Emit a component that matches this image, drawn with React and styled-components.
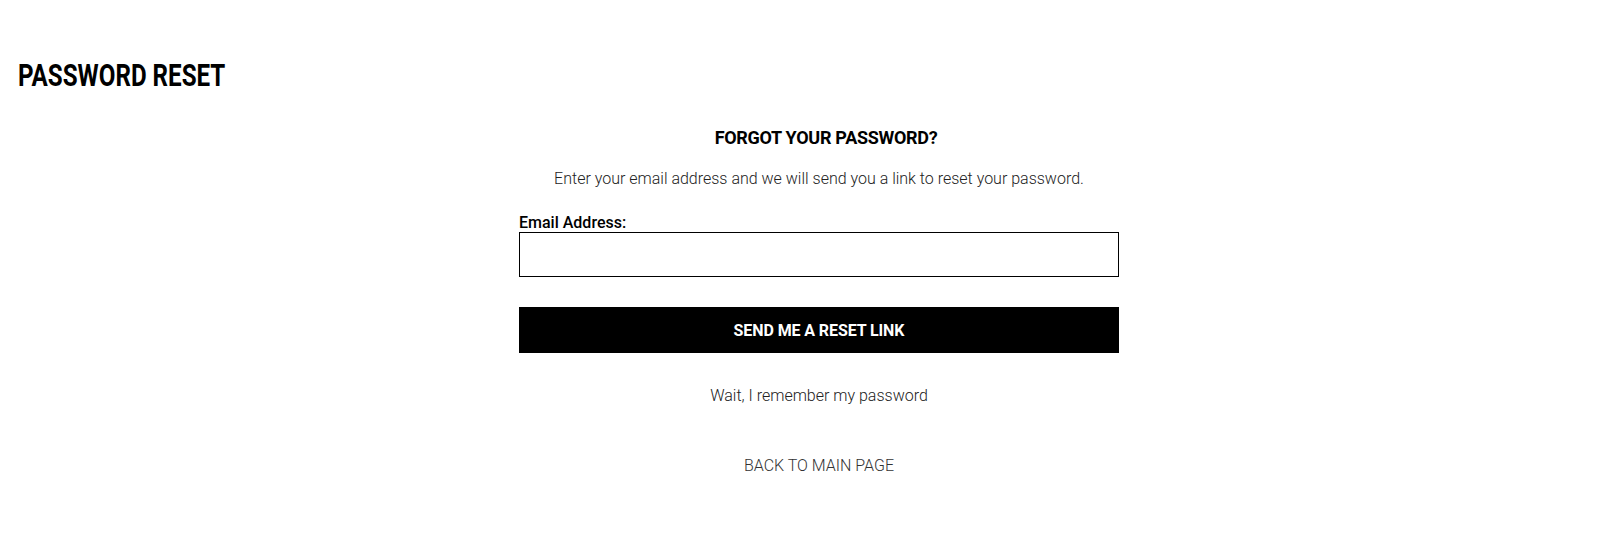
import React from 'react';
import styled, { createGlobalStyle } from 'styled-components';

const GlobalStyle = createGlobalStyle`
  html, body {
    margin: 0;
    padding: 0;
    background: #fff;
  }
  body {
    font-family: Roboto, "Liberation Sans", sans-serif;
    color: #000;
  }
`;

export default function App() {
  return (
    <React.Fragment>
      <GlobalStyle />
      <Page>
        <PageTitle>PASSWORD RESET</PageTitle>
        <FormColumn>
          <FormHeading>FORGOT YOUR PASSWORD?</FormHeading>
          <FormIntro>
            Enter your email address and we will send you a link to reset your password.
          </FormIntro>
          <FieldLabel htmlFor="email">Email Address:</FieldLabel>
          <EmailInput id="email" type="email" />
          <SubmitButton type="button">SEND ME A RESET LINK</SubmitButton>
          <TextLink href="#">Wait, I remember my password</TextLink>
          <BackLink href="#">BACK TO MAIN PAGE</BackLink>
        </FormColumn>
      </Page>
    </React.Fragment>
  );
}

const Page = styled.div`
  padding: 55px 0 40px 18px;
`;

// condensed display face is not installed, so the heading is narrowed
const PageTitle = styled.h1`
  margin: 0;
  font-size: 32px;
  line-height: 40px;
  font-weight: 700;
  transform: scaleX(0.755);
  transform-origin: left center;
`;

const FormColumn = styled.div`
  width: 600px;
  margin: 31px auto 0;
  display: flex;
  flex-direction: column;
  align-items: center;
`;

const FormHeading = styled.h2`
  margin: 0;
  padding-left: 14px;
  font-size: 18px;
  line-height: 24px;
  font-weight: 700;
  letter-spacing: -0.3px;
`;

const FormIntro = styled.p`
  margin: 18px 0 0;
  font-weight: 300;
  font-size: 16px;
  line-height: 22px;
  color: #222;
`;

const FieldLabel = styled.label`
  align-self: stretch;
  margin-top: 24px;
  font-weight: 500;
  font-size: 16px;
  line-height: 18px;
`;

const EmailInput = styled.input`
  align-self: stretch;
  box-sizing: border-box;
  height: 45px;
  margin: 0;
  border: 1px solid #000;
  border-radius: 0;
  padding: 0 12px;
  font-size: 16px;
  outline: none;
`;

const SubmitButton = styled.button`
  align-self: stretch;
  height: 46px;
  margin-top: 30px;
  border: 0;
  border-radius: 0;
  background: #000;
  color: #fff;
  font-family: Roboto, sans-serif;
  font-weight: 700;
  font-size: 16px;
  letter-spacing: -0.1px;
  cursor: pointer;
`;

const TextLink = styled.a`
  margin-top: 33px;
  font-weight: 300;
  font-size: 16px;
  line-height: 20px;
  color: #222;
  text-decoration: none;
`;

const BackLink = styled(TextLink)`
  margin-top: 50px;
  color: #333;
`;
